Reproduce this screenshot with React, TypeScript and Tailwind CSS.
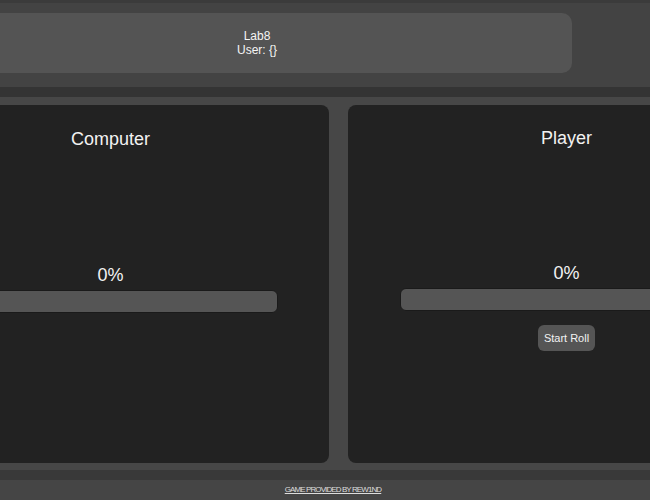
import React from "react";

function Card({ title, showButton, shift }: { title: string; showButton?: boolean; shift?: boolean }) {
  return (
    <div className={`flex-1 bg-[#222222] rounded-[8px] flex flex-col items-center ${shift ? "pt-[22px]" : "pt-[23px]"}`}>
      <h2 className="text-[18px] leading-[22px] text-[#f2f2f2]">{title}</h2>
      <div className={`text-[18px] leading-[22px] text-[#f2f2f2] ${shift ? "mt-[113px]" : "mt-[114px]"}`}>0%</div>
      <div className="mt-[4px] w-[334px] h-[23px] rounded-[6px] bg-[#555555] border border-[#1a1a1a]"></div>
      {showButton && (
        <button className="mt-[14px] h-[26px] px-[6px] rounded-[6px] bg-[#555555] text-[11px] text-[#f2f2f2] leading-none">
          Start Roll
        </button>
      )}
    </div>
  );
}

export default function App() {
  return (
    <div className="w-[650px] h-[500px] overflow-hidden bg-[#3a3a3a]" style={{ fontFamily: '"Liberation Sans", Arial, sans-serif' }}>
      <div className="w-[902px] ml-[-113px] flex flex-col">
        <div className="h-[3px] bg-[#3b3b3b]"></div>
        <header className="h-[84px] bg-[#434343] pt-[10px]">
          <div className="ml-[55px] w-[630px] h-[60px] rounded-[10px] bg-[#545454] flex flex-col items-center justify-center text-[12px] leading-[14px] text-[#f5f5f5]">
            <div>Lab8</div>
            <div>User: {"{}"}</div>
          </div>
        </header>
        <div className="h-[10px] bg-[#343434]"></div>
        <main className="bg-[#474747] pl-[5px] pr-[4px] pt-[8px] pb-[7px] flex gap-[19px] h-[373px]">
          <Card title="Computer" />
          <Card title="Player" showButton shift />
        </main>
        <div className="h-[10px] bg-[#393939]"></div>
        <footer className="h-[20px] bg-[#454545] flex items-center justify-center">
          <a className="text-[8px] tracking-[-0.9px] underline text-[#dddddd] ml-[-10px]">GAME PROVIDED BY REW1ND</a>
        </footer>
      </div>
    </div>
  );
}
